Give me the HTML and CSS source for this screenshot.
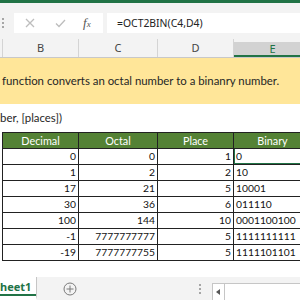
FILE: index.html
```html
<!DOCTYPE html>
<html lang="en">
  <head>
    <meta charset="UTF-8" />
    <meta name="viewport" content="width=device-width, initial-scale=1.0" />
    <title>OCT2BIN</title>
    <link rel="stylesheet" href="styles.css">
  </head>
  <body>
    <div class="ribbon"></div>

    <div class="formula-bar">
      <span class="grip"><i></i><i></i><i></i></span>
      <div class="fx-box">
        <svg class="icon cancel" width="10" height="10" viewBox="0 0 10 10">
          <path d="M1 1 L9 9 M9 1 L1 9" />
        </svg>
        <svg class="icon enter" width="11" height="9" viewBox="0 0 11 9">
          <path d="M1 4.5 L4 7.5 L10 1" />
        </svg>
        <span class="fx"><i>f</i><small>x</small></span>
      </div>
      <div class="formula">=OCT2BIN(C4,D4)</div>
    </div>

    <div class="col-heads">
      <span class="stub"></span>
      <span class="col col-b">B</span>
      <span class="col col-c">C</span>
      <span class="col col-d">D</span>
      <span class="col col-e active">E</span>
    </div>

    <div class="note">function converts an octal number to a binanry number.</div>
    <div class="syntax">ber, [places])</div>

    <table class="data">
      <colgroup>
        <col class="col-b" />
        <col class="col-c" />
        <col class="col-d" />
        <col class="col-e" />
      </colgroup>
      <thead>
        <tr>
          <th>Decimal</th>
          <th>Octal</th>
          <th>Place</th>
          <th>Binary</th>
        </tr>
      </thead>
      <tbody>
        <tr>
          <td class="num">0</td>
          <td class="num">0</td>
          <td class="num">1</td>
          <td class="selected">0</td>
        </tr>
        <tr>
          <td class="num">1</td>
          <td class="num">2</td>
          <td class="num">2</td>
          <td>10</td>
        </tr>
        <tr>
          <td class="num">17</td>
          <td class="num">21</td>
          <td class="num">5</td>
          <td>10001</td>
        </tr>
        <tr class="double">
          <td class="num">30</td>
          <td class="num">36</td>
          <td class="num">6</td>
          <td>011110</td>
        </tr>
        <tr>
          <td class="num">100</td>
          <td class="num">144</td>
          <td class="num">10</td>
          <td>0001100100</td>
        </tr>
        <tr>
          <td class="num">-1</td>
          <td class="num">7777777777</td>
          <td class="num">5</td>
          <td>1111111111</td>
        </tr>
        <tr class="double">
          <td class="num">-19</td>
          <td class="num">7777777755</td>
          <td class="num">5</td>
          <td>1111101101</td>
        </tr>
      </tbody>
    </table>

    <div class="spacer"></div>

    <div class="tabs">
      <span class="tab">heet1</span>
      <svg class="add-sheet" width="14" height="14" viewBox="0 0 14 14">
        <circle cx="7" cy="7" r="6" />
        <path d="M7 3.5 V10.5 M3.5 7 H10.5" />
      </svg>
      <span class="tab-grip"><i></i><i></i><i></i></span>
      <div class="hscroll">
        <span class="arrow"></span>
      </div>
    </div>
  </body>
</html>
```

FILE: styles.css
```css
body {
  width: 300px;
  height: 300px;
  margin: 0;
  overflow: hidden;
  display: flex;
  flex-direction: column;
  background: #fff;
  font-family: "Lato", "Liberation Sans", sans-serif;
}

.ribbon {
  height: 3px;
  flex: none;
  background: #217346;
}

/* formula bar */

.formula-bar {
  height: 36px;
  flex: none;
  display: flex;
  align-items: flex-start;
  padding-top: 10px;
  box-sizing: border-box;
  background: #f3f3f3;
}

.grip {
  width: 14px;
  height: 20px;
  display: flex;
  flex-direction: column;
  justify-content: center;
  gap: 2px;
  padding-left: 2px;
  box-sizing: border-box;
}

.grip i,
.tab-grip i {
  width: 2px;
  height: 2px;
  background: #a6a6a6;
}

.fx-box {
  width: 89px;
  height: 20px;
  display: flex;
  align-items: center;
  background: #fff;
}

.icon {
  fill: none;
  stroke: #bdbdbd;
  stroke-width: 1.3;
}

.cancel {
  margin-left: 11px;
}

.enter {
  margin-left: 20px;
}

.fx {
  margin-left: 17px;
  font-family: "Liberation Serif", serif;
  font-size: 13px;
  color: #555;
}

.fx small {
  font-size: 9px;
  font-style: italic;
}

.formula {
  flex: 1;
  height: 20px;
  margin-left: 4px;
  padding-left: 10px;
  background: #fff;
  font-family: "Noto Sans", sans-serif;
  font-size: 10.4px;
  line-height: 20px;
  color: #222;
}

/* column headers */

.col-heads {
  height: 18px;
  flex: none;
  display: flex;
  background: #f3f3f3;
  border-bottom: 1px solid #c8c8c8;
  font-family: "Noto Sans", sans-serif;
  font-size: 11px;
  color: #444;
}

.stub {
  width: 2px;
  flex: none;
  border-right: 1px solid #d4d4d4;
}

.col {
  flex: none;
  text-align: center;
  line-height: 18px;
  border-right: 1px solid #d4d4d4;
  box-sizing: border-box;
}

.col-b { width: 76px; }
.col-c { width: 79px; }
.col-d { width: 76px; }
.col-e { width: 78px; }

.col.active {
  background: #d2d2d2;
  color: #217346;
  border-top: 3px solid #f3f3f3;
  border-bottom: 2px solid #217346;
  line-height: 13px;
}

/* sheet content */

.note {
  height: 46px;
  flex: none;
  padding-left: 2px;
  background: #ffe699;
  font-size: 11.4px;
  line-height: 46px;
  color: #262626;
  white-space: nowrap;
}

.syntax {
  height: 28px;
  flex: none;
  padding-top: 7px;
  box-sizing: border-box;
  font-size: 11.4px;
  color: #262626;
  white-space: nowrap;
}

.data {
  flex: none;
  margin-left: 2px;
  width: 309px;
  table-layout: fixed;
  border-collapse: collapse;
  font-size: 10.3px;
  color: #111;
}

.data th,
.data td {
  height: 15px;
  padding: 0 2px;
  border: 1px solid #222;
  line-height: 15px;
  white-space: nowrap;
}

.data th {
  background: #548235;
  color: #fff;
  font-size: 10.8px;
  font-weight: normal;
  text-align: center;
}

.data td.num {
  text-align: right;
}

.data td.selected {
  box-shadow: inset 1px 0 0 #217346, inset 0 -1px 0 #217346;
}

.data tr.double td {
  box-shadow: 0 -1px 0 #9a9a9a;
}

.spacer {
  flex: 1;
}

/* sheet tabs */

.tabs {
  height: 23px;
  flex: none;
  display: flex;
  align-items: flex-start;
  background: #f3f3f3;
  font-family: "Noto Sans", sans-serif;
}

.tab {
  width: 37px;
  height: 23px;
  box-sizing: border-box;
  padding-top: 2px;
  background: #fff;
  border-right: 1px solid #c6c6c6;
  font-size: 11px;
  font-weight: bold;
  line-height: 16px;
  color: #217346;
  border-bottom: 4px solid #fff;
  box-shadow: inset 0 -6px 0 -4px #217346;
}

.add-sheet {
  margin: 5px 0 0 26px;
  fill: none;
  stroke: #7a7a7a;
  stroke-width: 1;
}

.tab-grip {
  display: flex;
  flex-direction: column;
  gap: 2px;
  margin: 7px 0 0 122px;
}

.hscroll {
  flex: 1;
  height: 18px;
  margin: 6px 0 0 11px;
  background: #fff;
  border: 1px solid #c6c6c6;
  border-right: none;
  display: flex;
}

.arrow {
  width: 11px;
  border-right: 1px solid #c6c6c6;
  position: relative;
}

.arrow::before {
  content: "";
  position: absolute;
  left: 3px;
  top: 5px;
  border-right: 4px solid #555;
  border-top: 3px solid transparent;
  border-bottom: 3px solid transparent;
}
```
